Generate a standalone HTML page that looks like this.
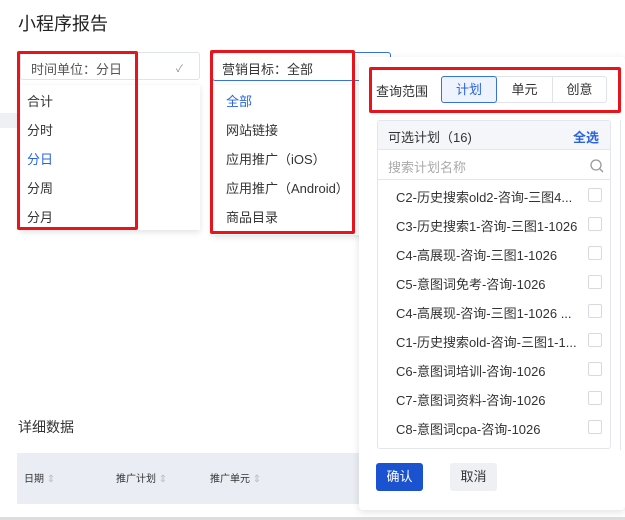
<!DOCTYPE html>
<html><head><meta charset="utf-8"><style>
*{margin:0;padding:0;box-sizing:border-box}
body{width:625px;height:520px;overflow:hidden;background:#fff;position:relative;font-family:"Liberation Sans","Noto Sans CJK SC",sans-serif;color:#333;font-size:13px}
.a{position:absolute}
.red{position:absolute;border:3px solid #e8141c;border-radius:2px}
.item{position:absolute;font-size:13px;color:#333;white-space:nowrap}
.cb{position:absolute;left:588px;width:14px;height:14px;border:1px solid #d5d9e0;border-radius:2px;background:#fff}
.pl{position:absolute;left:396px;font-size:13px;color:#333;white-space:nowrap}
</style></head><body>
<div class="a" style="left:18px;top:10px;font-size:18px;color:#222">小程序报告</div>
<div class="a" style="left:0;top:113px;width:20px;height:15px;background:#eef0f4"></div>
<!-- select 1 -->
<div class="a" style="left:20px;top:52px;width:180px;height:28px;border:1px solid #dfe3ea;border-radius:3px"></div>
<div class="a" style="left:31px;top:59px;color:#555">时间单位：分日</div>
<div class="a" style="left:176px;top:60px;color:#888;font-size:10px">✓</div>
<div class="a" style="left:20px;top:85px;width:180px;height:145px;background:#fff;box-shadow:0 2px 6px rgba(0,0,0,.12)"></div>
<div class="item" style="left:27px;top:91px">合计</div>
<div class="item" style="left:27px;top:120px">分时</div>
<div class="item" style="left:27px;top:149px;color:#2a64e0">分日</div>
<div class="item" style="left:27px;top:178px">分周</div>
<div class="item" style="left:27px;top:207px">分月</div>
<div class="red" style="left:17px;top:51px;width:121px;height:179px"></div>
<!-- select 2 -->
<div class="a" style="left:212px;top:52px;width:179px;height:29px;border:1px solid #3a70e0;border-radius:3px"></div>
<div class="a" style="left:222px;top:59px;color:#333">营销目标：全部</div>
<div class="a" style="left:212px;top:85px;width:160px;height:150px;background:#fff;box-shadow:0 2px 6px rgba(0,0,0,.12)"></div>
<div class="item" style="left:226px;top:91px;color:#2a64e0">全部</div>
<div class="item" style="left:226px;top:120px">网站链接</div>
<div class="item" style="left:226px;top:149px">应用推广（iOS）</div>
<div class="item" style="left:226px;top:178px">应用推广（Android）</div>
<div class="item" style="left:226px;top:207px">商品目录</div>
<div class="red" style="left:210px;top:50px;width:145px;height:184px"></div>
<!-- bottom left -->
<div class="a" style="left:18px;top:417px;font-size:14px;color:#333">详细数据</div>
<div class="a" style="left:17px;top:453px;width:345px;height:51px;background:#eaedf3"></div>
<div class="a" style="left:24px;top:470px;font-size:10px;color:#333">日期 <span style="color:#bbb">⇕</span></div>
<div class="a" style="left:116px;top:470px;font-size:10px;color:#333">推广计划 <span style="color:#bbb">⇕</span></div>
<div class="a" style="left:210px;top:470px;font-size:10px;color:#333">推广单元 <span style="color:#bbb">⇕</span></div>
<div class="a" style="left:0;top:517px;width:625px;height:3px;background:#ddd"></div>
<!-- right panel -->
<div class="a" style="left:359px;top:57px;width:266px;height:453px;background:#fff;box-shadow:0 2px 8px rgba(0,0,0,.12);border-radius:4px"></div>
<div class="a" style="left:376px;top:81px;color:#333">查询范围</div>
<div class="a" style="left:441px;top:76px;width:166px;height:27px;border:1px solid #dfe3ea;border-radius:3px"></div>
<div class="a" style="left:441px;top:76px;width:56px;height:27px;border:1px solid #3a70e0;border-radius:3px;background:#eef3fd;color:#2a64e0;text-align:center;line-height:25px">计划</div>
<div class="a" style="left:552px;top:77px;width:1px;height:25px;background:#dfe3ea"></div>
<div class="a" style="left:497px;top:76px;width:55px;line-height:27px;text-align:center">单元</div>
<div class="a" style="left:552px;top:76px;width:55px;line-height:27px;text-align:center">创意</div>
<div class="red" style="left:369px;top:67px;width:252px;height:46px"></div>
<div class="a" style="left:377px;top:120px;width:234px;height:329px;border:1px solid #e3e6ec;border-radius:3px"></div>
<div class="a" style="left:378px;top:121px;width:232px;height:29px;background:#f5f6f9;border-bottom:1px solid #e3e6ec"></div>
<div class="a" style="left:388px;top:127px">可选计划（16)</div>
<div class="a" style="left:573px;top:127px;color:#2a64e0;font-weight:bold">全选</div>
<div class="a" style="left:378px;top:150px;width:232px;height:30px;border-bottom:1px solid #e3e6ec"></div>
<div class="a" style="left:388px;top:157px;color:#aaa">搜索计划名称</div>
<svg class="a" style="left:590px;top:159px" width="14" height="14"><circle cx="6" cy="6" r="5" fill="none" stroke="#999" stroke-width="1.3"/><path d="M10 10 L13 13" stroke="#999" stroke-width="1.3"/></svg>
<div class="a" style="left:620px;top:120px;width:1px;height:330px;background:#e3e6ec"></div>
<div class="pl" style="top:187px">C2-历史搜索old2-咨询-三图4...</div><div class="cb" style="top:188px"></div>
<div class="pl" style="top:216px">C3-历史搜索1-咨询-三图1-1026</div><div class="cb" style="top:217px"></div>
<div class="pl" style="top:245px">C4-高展现-咨询-三图1-1026</div><div class="cb" style="top:246px"></div>
<div class="pl" style="top:274px">C5-意图词免考-咨询-1026</div><div class="cb" style="top:275px"></div>
<div class="pl" style="top:303px">C4-高展现-咨询-三图1-1026 ...</div><div class="cb" style="top:304px"></div>
<div class="pl" style="top:332px">C1-历史搜索old-咨询-三图1-1...</div><div class="cb" style="top:333px"></div>
<div class="pl" style="top:361px">C6-意图词培训-咨询-1026</div><div class="cb" style="top:362px"></div>
<div class="pl" style="top:390px">C7-意图词资料-咨询-1026</div><div class="cb" style="top:391px"></div>
<div class="pl" style="top:419px">C8-意图词cpa-咨询-1026</div><div class="cb" style="top:420px"></div>
<div class="a" style="left:376px;top:463px;width:47px;height:28px;background:#1a52d0;border-radius:3px;color:#fff;text-align:center;line-height:28px">确认</div>
<div class="a" style="left:450px;top:463px;width:47px;height:28px;background:#eef0f4;border-radius:3px;color:#333;text-align:center;line-height:28px">取消</div>
</body></html>
